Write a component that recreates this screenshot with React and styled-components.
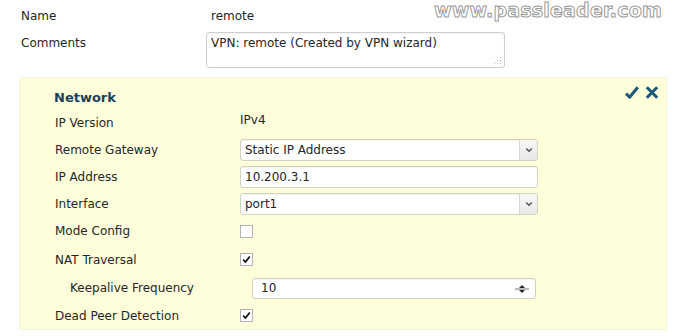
import React from "react";
import styled, { createGlobalStyle } from "styled-components";

const Global = createGlobalStyle`
  html, body { margin: 0; padding: 0; background: #fff; }
  body { font-family: "DejaVu Sans", Verdana, sans-serif; font-size: 12px; color: #262626; }
  * { box-sizing: border-box; }
`;

const Page = styled.div`
  position: relative;
  width: 688px;
  height: 336px;
  padding-top: 4px;
  overflow: hidden;
`;

const Watermark = styled.div`
  position: absolute;
  left: 434px;
  top: 0;
  font-family: "DejaVu Sans", sans-serif;
  font-weight: bold;
  font-size: 19px;
  line-height: 20px;
  letter-spacing: 0.2px;
  color: #fff;
  -webkit-text-stroke: 1px #9a9a9a;
  white-space: nowrap;
`;

const TopForm = styled.div`
  display: grid;
  grid-template-columns: 185px 300px;
  row-gap: 4px;
  margin-left: 21px;
`;

const TopLabel = styled.div`
  line-height: 14px;
  padding-top: ${(p) => p.$pt || 5}px;
`;

const TopValue = styled.div`
  line-height: 14px;
  padding: 5px 0 5px 5px;
`;

const Comment = styled.div`
  position: relative;
  width: 299px;
  height: 36px;
  border: 1px solid #cfcfcf;
  border-radius: 3px;
  padding: 3px 4px;
  line-height: 14px;
  background: #fff;
  box-shadow: inset 0 1px 2px rgba(0,0,0,0.06);
`;

const Grip = styled.svg`
  position: absolute;
  right: 2px;
  bottom: 2px;
`;

const Panel = styled.section`
  margin: 9px 0 0 19px;
  width: 648px;
  height: 253px;
  background: #fefedb;
  border: 1px solid #f6f6d8;
  padding: 11px 7px 0 34px;
`;

const PanelHead = styled.div`
  display: flex;
  justify-content: space-between;
  align-items: flex-start;
  height: 20px;
`;

const Title = styled.h3`
  margin: 0;
  font-size: 13px;
  font-weight: bold;
  line-height: 18px;
  color: #1d3f5c;
`;

const Actions = styled.div`
  display: flex;
  gap: 6px;
  margin-top: -3px;
`;

const Row = styled.div`
  display: grid;
  grid-template-columns: ${(p) => (p.$indent ? "185px 1fr" : "186px 1fr")};
  align-items: center;
  height: ${(p) => p.$h || 27}px;
  padding-left: ${(p) => (p.$indent ? 15 : 0)}px;
`;

const Label = styled.div`
  line-height: 14px;
  padding-left: 1px;
`;

const Value = styled.div`
  line-height: 14px;
  padding-bottom: ${(p) => p.$up || 0}px;
`;

const Box = styled.div`
  position: relative;
  display: flex;
  align-items: center;
  width: ${(p) => p.$w || 298}px;
  height: ${(p) => p.$ht || 22}px;
  background: #fff;
  border: 1px solid #d2d2c0;
  border-radius: 3px;
  padding-left: ${(p) => p.$pl || 4}px;
  line-height: 14px;
  box-shadow: inset 0 1px 1px rgba(0,0,0,0.05);
  margin-left: ${(p) => p.$ml || 0}px;
`;

const Arrow = styled.div`
  position: absolute;
  right: 0;
  top: 0;
  bottom: 0;
  width: 18px;
  border-left: 1px solid #d8d8d8;
  background: linear-gradient(#f8f8f8, #e8e8e8);
  border-radius: 0 2px 2px 0;
  display: flex;
  align-items: center;
  justify-content: center;
`;

const Spin = styled.div`
  position: absolute;
  right: 5px;
  top: 5px;
  width: 16px;
  height: 10px;
  display: flex;
  align-items: center;
  justify-content: center;
`;

const Check = styled.div`
  width: 13px;
  height: 13px;
  border: 1px solid #b3b3b3;
  background: #fff;
  display: flex;
  align-items: center;
  justify-content: center;
`;

const CheckBox = ({ on }) => (
  <Check>
    {on && (
      <svg width="9" height="9" viewBox="0 0 9 9">
        <path d="M1.2 4.6 L3.5 7 L7.8 1.5" fill="none" stroke="#111" strokeWidth="1.8" />
      </svg>
    )}
  </Check>
);

const Chevron = () => (
  <svg width="8" height="6" viewBox="0 0 8 6">
    <path d="M1.2 1.5 L4 4.3 L6.8 1.5" fill="none" stroke="#555" strokeWidth="1.5" />
  </svg>
);

const Spinner = () => (
  <svg width="16" height="10" viewBox="0 0 16 10">
    <line x1="1" y1="5" x2="15" y2="5" stroke="#777" strokeWidth="1" />
    <path d="M5 4 L8 1 L11 4 Z" fill="#222" />
    <path d="M5 6 L8 9 L11 6 Z" fill="#222" />
  </svg>
);

export default function App() {
  return (
    <Page>
      <Global />
      <Watermark>www.passleader.com</Watermark>
      <TopForm>
        <TopLabel>Name</TopLabel>
        <TopValue>remote</TopValue>
        <TopLabel $pt={4}>Comments</TopLabel>
        <Comment>
          VPN: remote (Created by VPN wizard)
          <Grip width="9" height="9" viewBox="0 0 9 9">
            <g fill="#b8b8b8">
              <rect x="7" y="1" width="1" height="1" />
              <rect x="4" y="4" width="1" height="1" />
              <rect x="7" y="4" width="1" height="1" />
              <rect x="1" y="7" width="1" height="1" />
              <rect x="4" y="7" width="1" height="1" />
              <rect x="7" y="7" width="1" height="1" />
            </g>
          </Grip>
        </Comment>
      </TopForm>
      <Panel>
        <PanelHead>
          <Title>Network</Title>
          <Actions>
            <svg width="14" height="13" viewBox="0 0 14 13">
              <path d="M1 7.5 L4.6 11.2 L12.8 1.2" fill="none" stroke="#1b587c" strokeWidth="3" strokeLinejoin="round" />
            </svg>
            <svg width="14" height="13" viewBox="0 0 14 13">
              <path d="M1.8 1.2 L12.2 11.8 M12.2 1.2 L1.8 11.8" stroke="#1b587c" strokeWidth="3" />
            </svg>
          </Actions>
        </PanelHead>
        <Row>
          <Label>IP Version</Label>
          <Value $up={5}>IPv4</Value>
        </Row>
        <Row>
          <Label>Remote Gateway</Label>
          <Box>
            Static IP Address
            <Arrow><Chevron /></Arrow>
          </Box>
        </Row>
        <Row>
          <Label>IP Address</Label>
          <Box>10.200.3.1</Box>
        </Row>
        <Row>
          <Label>Interface</Label>
          <Box>
            port1
            <Arrow><Chevron /></Arrow>
          </Box>
        </Row>
        <Row $h={28}>
          <Label>Mode Config</Label>
          <CheckBox />
        </Row>
        <Row $h={29}>
          <Label>NAT Traversal</Label>
          <CheckBox on />
        </Row>
        <Row $h={28} $indent>
          <Label>Keepalive Frequency</Label>
          <Box $w={284} $ht={21} $pl={8} $ml={-2}>
            10
            <Spin><Spinner /></Spin>
          </Box>
        </Row>
        <Row>
          <Label>Dead Peer Detection</Label>
          <CheckBox on />
        </Row>
      </Panel>
    </Page>
  );
}
